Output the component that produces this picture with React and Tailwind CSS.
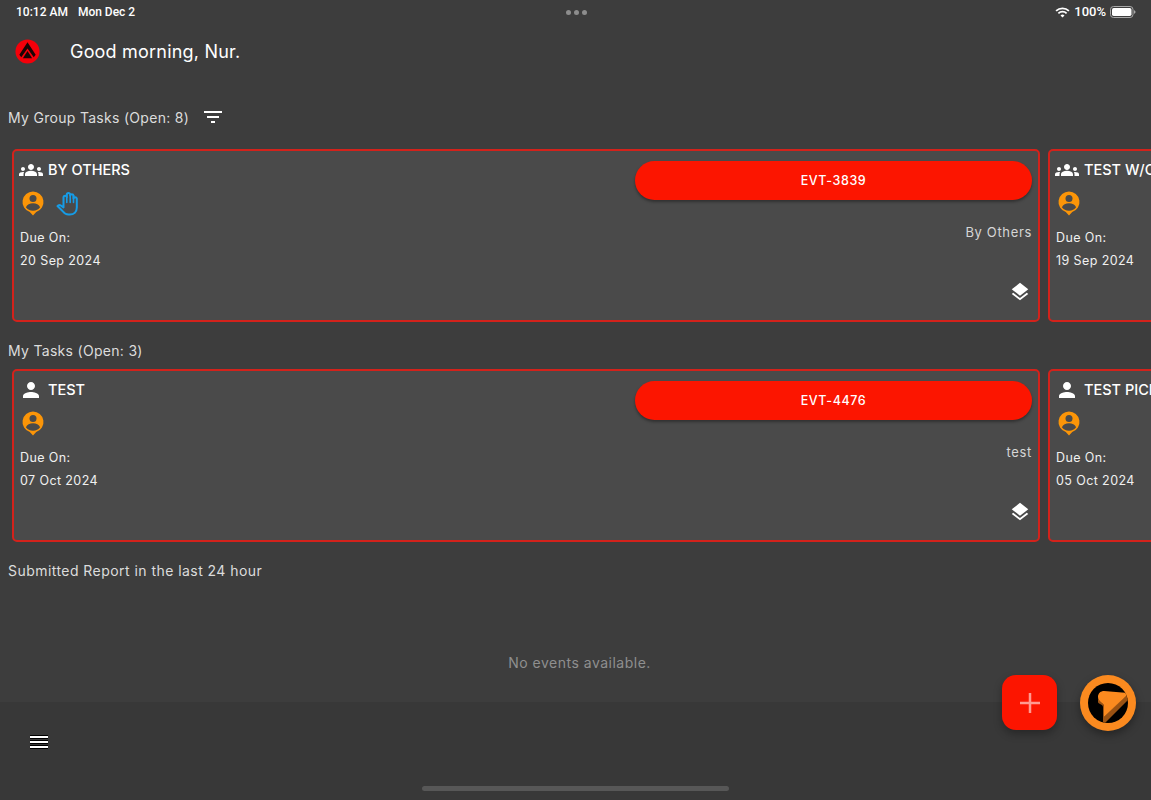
import React from "react";
import { MdGroups, MdPerson, MdLayers, MdFilterList } from "react-icons/md";

const F = "font-['Inter','Liberation_Sans',sans-serif]";

function PinUser({ className }) {
  return (
    <svg viewBox="0 0 24 26" className={className}>
      <path fill="#fb9508" d="M12 1.500a10.500 10.500 0 0 0-3.200 20.500L12 25.400l3.200-3.400A10.500 10.500 0 0 0 12 1.500z" />
      <circle cx="12" cy="8.600" r="3.500" fill="#4a4a4a" />
      <path fill="#4a4a4a" d="M4.900 17.200c1-2.700 3.900-4 7.100-4s6.100 1.300 7.100 4c-1.500 2.200-4.100 3.500-7.100 3.500s-5.600-1.300-7.100-3.500z" />
    </svg>
  );
}

function HandIcon() {
  return (
    <svg viewBox="0 0 24 24" className="w-[24px] h-[25px]" fill="none" stroke="#169ce6" strokeWidth="2" strokeLinecap="round" strokeLinejoin="round">
      <path d="M7.500 16V5.500a1.700 1.700 0 0 1 3.300 0V3.200a1.700 1.700 0 0 1 3.400 0V4a1.700 1.700 0 0 1 3.300 0V7a1.700 1.700 0 0 1 3.300 0V16c0 4.500-3 7-7 7h-1.300c-3 0-4.500-1.500-6-3.500L1.500 14.500c1-1.500 3-1.500 4 0L7.500 16z" />
      <path d="M10.800 5.500V11M14.200 3.500V11M17.500 4V11" strokeWidth="1.600" />
    </svg>
  );
}

function Card({ groupIcon, title, evt, note, due, hand, width = "w-[1028px]" }) {
  return (
    <div className={`${width} h-[173px] shrink-0 rounded-[5px] border-2 border-[#d3221b] bg-[#4a4a4a] relative pl-[6px] pt-[7px] pr-[6px] flex justify-between`}>
      <div className="flex flex-col">
        <div className="flex items-center h-[24px] -ml-[1px]">
          <span className="w-[24px] flex justify-center text-white">{groupIcon}</span>
          <span className="ml-[5px] text-[14.500px] font-medium text-white whitespace-nowrap">{title}</span>
        </div>
        <div className="flex items-center gap-[11px] mt-[8px] ml-[1px] h-[26px]">
          <PinUser className="w-[24px] h-[26px]" />
          {hand && <HandIcon />}
        </div>
        <div className="mt-[10px] text-[12.500px] text-[#f0f0f0] leading-[23px] tracking-[0.4px] whitespace-nowrap">
          <div>Due On:</div>
          <div>{due}</div>
        </div>
      </div>
      {evt && (
        <div className="flex flex-col items-end w-[397px] mt-[3px]">
          <div className="w-full h-[39px] rounded-full bg-[#fc1500] flex items-center justify-center text-white text-[12.500px] font-medium tracking-[0.6px] pt-[1px] shadow-[0_2px_3px_rgba(0,0,0,0.35)]">
            {evt}
          </div>
          <div className="mt-[23px] text-[13px] text-[#d6d6d6] tracking-[0.65px]">{note}</div>
          <MdLayers className="w-[22px] h-[22px] text-white mt-[38px] mr-[1px]" />
        </div>
      )}
    </div>
  );
}

function Logo() {
  return (
    <svg viewBox="0 0 26 26" className="w-[25px] h-[25px]">
      <circle cx="13" cy="13" r="12.500" fill="#f5000a" />
      <path fill="#1a0505" d="M13 3.500 21.500 16.500 19.500 19 13 9.800 6.500 19 4.500 16.500z" />
      <path fill="#1a0505" d="M13 12.500 17.800 20H8.200z" />
    </svg>
  );
}

function Brand() {
  return (
    <svg viewBox="0 0 56 56" className="w-full h-full">
      <circle cx="28" cy="28" r="28" fill="#fb8a1f" />
      <circle cx="28" cy="28" r="20" fill="#000" />
      <clipPath id="brandClip"><circle cx="28" cy="28" r="20" /></clipPath>
      <g clipPath="url(#brandClip)">
        <path fill="#9a5213" d="M18 22v5c0 2 5 2 5 5V50L50 23 47 19 24 42V31C24 28 18 27 18 22z" />
        <path fill="#fb8a1f" d="M18 22c0-4 3-6 6-6L49 18 24 42V31C24 28 18 27 18 22z" />
      </g>
    </svg>
  );
}

function Wifi() {
  return (
    <svg viewBox="0 0 16 12" className="w-[15px] h-[11px]" fill="none" stroke="#fff" strokeWidth="1.900">
      <path d="M1 4.300a10 10 0 0 1 14 0" />
      <path d="M3.500 6.900a6.400 6.400 0 0 1 9 0" />
      <path d="M8 11.500 5.800 9.300a3.100 3.100 0 0 1 4.400 0z" fill="#fff" stroke="none" />
    </svg>
  );
}

function Battery() {
  return (
    <svg viewBox="0 0 26 12" className="w-[26px] h-[12px]">
      <rect x="0.500" y="0.500" width="22.500" height="11" rx="3" fill="none" stroke="#a8a8a8" />
      <rect x="2" y="2" width="19.500" height="8" rx="1.700" fill="#fff" />
      <path d="M24 4.200c1 .3 1.500 1 1.500 1.800s-.5 1.500-1.500 1.800z" fill="#a8a8a8" />
    </svg>
  );
}

function Hamburger() {
  return (
    <div className="flex flex-col gap-[1px] w-[18px]">
      <div className="h-[4px] bg-black pt-[1px]"><div className="h-[2px] bg-white" /></div>
      <div className="h-[4px] bg-black pt-[1px]"><div className="h-[2px] bg-white" /></div>
      <div className="h-[4px] bg-black pt-[1px]"><div className="h-[2px] bg-white" /></div>
    </div>
  );
}

export default function App() {
  return (
    <div className={`relative w-[1151px] h-[800px] overflow-hidden bg-[#3d3d3d] flex flex-col ${F}`}>
      <div className="h-[24px] flex items-center justify-between pl-[16px] pr-[15px] text-[12px] font-medium text-white shrink-0 font-['Roboto',sans-serif]">
        <div className="flex gap-[10px] w-[300px]"><span>10:12 AM</span><span>Mon Dec 2</span></div>
        <div className="flex gap-[3px]">
          <span className="w-[5px] h-[5px] rounded-full bg-[#8d8d8d]" />
          <span className="w-[5px] h-[5px] rounded-full bg-[#8d8d8d]" />
          <span className="w-[5px] h-[5px] rounded-full bg-[#8d8d8d]" />
        </div>
        <div className="flex items-center justify-end gap-[4px] w-[300px]"><Wifi /><span className="text-[13px]">100%</span><Battery /></div>
      </div>

      <div className="flex items-center h-[54px] pl-[15px] shrink-0">
        <Logo />
        <span className="ml-[30px] text-[18px] text-white tracking-[0.2px]">Good morning, Nur.</span>
      </div>

      <div className="flex items-center h-[24px] mt-[27px] pl-[8px] shrink-0">
        <span className="text-[14px] text-[#dcdcdc] tracking-[0.3px]">My Group Tasks (Open: 8)</span>
        <MdFilterList className="w-[24px] h-[24px] text-white ml-[12px]" />
      </div>

      <div className="flex gap-[8px] pl-[12px] mt-[20px] shrink-0 overflow-hidden">
        <Card groupIcon={<MdGroups className="w-[24px] h-[24px]" />} title="BY OTHERS" evt="EVT-3839" note="By Others" due="20 Sep 2024" hand />
        <Card groupIcon={<MdGroups className="w-[24px] h-[24px]" />} title="TEST W/O PICKUP" due="19 Sep 2024" width="w-[200px]" />
      </div>

      <div className="h-[24px] mt-[16px] pl-[8px] flex items-center shrink-0">
        <span className="text-[14px] text-[#dcdcdc] tracking-[0.3px]">My Tasks (Open: 3)</span>
      </div>

      <div className="flex gap-[8px] pl-[12px] mt-[7px] shrink-0 overflow-hidden">
        <Card groupIcon={<MdPerson className="w-[24px] h-[24px]" />} title="TEST" evt="EVT-4476" note="test" due="07 Oct 2024" />
        <Card groupIcon={<MdPerson className="w-[24px] h-[24px]" />} title="TEST PICKUP" due="05 Oct 2024" width="w-[200px]" />
      </div>

      <div className="h-[24px] mt-[16px] pl-[8px] flex items-center shrink-0">
        <span className="text-[14px] text-[#dcdcdc] tracking-[0.45px]">Submitted Report in the last 24 hour</span>
      </div>

      <div className="flex-1 flex items-start justify-center pl-[8px] pt-[70px]">
        <span className="text-[14px] text-[#8f8f8f] tracking-[0.5px]">No events available.</span>
      </div>

      <div className="h-[98px] bg-[#383838] shrink-0 relative flex flex-col">
        <div className="pl-[30px] pt-[33px]"><Hamburger /></div>
        <div className="absolute bottom-[9px] left-[422px] w-[307px] h-[5px] rounded-full bg-[#575757]" />
      </div>

      <button className="absolute left-[1002px] top-[675px] w-[55px] h-[55px] rounded-[14px] bg-[#fc1500] flex items-center justify-center shadow-[0_4px_8px_rgba(0,0,0,0.3)]">
        <svg viewBox="0 0 20 20" className="w-[20px] h-[20px]"><path d="M10 0v20M0 10h20" stroke="#ff9a90" strokeWidth="2.500" /></svg>
      </button>
      <div className="absolute left-[1080px] top-[675px] w-[56px] h-[56px] rounded-full shadow-[0_4px_8px_rgba(0,0,0,0.35)]"><Brand /></div>
    </div>
  );
}
